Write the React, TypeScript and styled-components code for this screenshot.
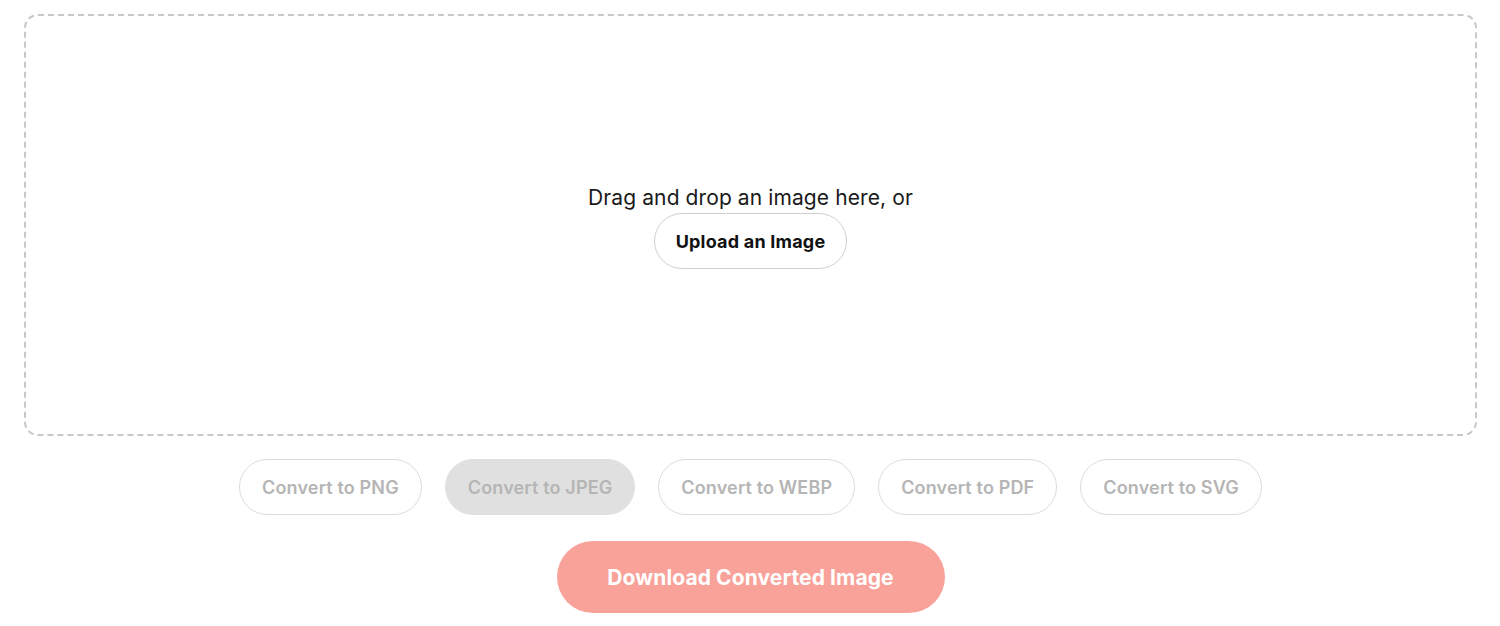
import React from "react";
import styled, { createGlobalStyle } from "styled-components";

const Global = createGlobalStyle`
  html, body { margin: 0; padding: 0; background: #ffffff; }
  body { font-family: Inter, "Noto Sans", Arial, sans-serif; }
  * { box-sizing: border-box; }
`;

const Page = styled.div`
  padding: 14px 23px 0 24px;
  display: flex;
  flex-direction: column;
  align-items: center;
`;

const DropZone = styled.div`
  width: 100%;
  height: 422px;
  border: 2px dashed #c8c8c8;
  border-radius: 14px;
  display: flex;
  flex-direction: column;
  align-items: center;
  justify-content: center;
  gap: 3px;
  padding-top: 4px;
`;

const Hint = styled.div`
  font-size: 21px;
  color: #1a1a1a;
  letter-spacing: 0.1px;
`;

const PillButton = styled.button<{ $active?: boolean }>`
  height: 56px;
  padding: 0 22px;
  border-radius: 28px;
  border: 1px solid ${(p) => (p.$active ? "#e0e0e0" : "#dcdcdc")};
  background: ${(p) => (p.$active ? "#e0e0e0" : "#ffffff")};
  font-family: Inter, "Noto Sans", Arial, sans-serif;
  font-size: 18px;
  font-weight: 600;
  letter-spacing: 0.15px;
  color: #b5b5b5;
  cursor: pointer;
`;

const UploadButton = styled(PillButton)`
  border-color: #cfcfcf;
  color: #111111;
  font-weight: 700;
  font-size: 18px;
  letter-spacing: 0.2px;
  padding: 0 21px;
`;

const ConvertRow = styled.div`
  display: flex;
  gap: 23px;
  margin-top: 23px;
`;

const DownloadButton = styled.button`
  margin-top: 26px;
  height: 72px;
  width: 388px;
  border: none;
  border-radius: 36px;
  background: #f9a29a;
  color: #ffffff;
  font-family: Inter, "Noto Sans", Arial, sans-serif;
  font-size: 21px;
  font-weight: 700;
  letter-spacing: 0.1px;
  cursor: pointer;
`;

const formats = ["PNG", "JPEG", "WEBP", "PDF", "SVG"];

export default function App() {
  return (
    <>
      <Global />
      <Page>
        <DropZone>
          <Hint>Drag and drop an image here, or</Hint>
          <UploadButton>Upload an Image</UploadButton>
        </DropZone>
        <ConvertRow>
          {formats.map((f) => (
            <PillButton key={f} $active={f === "JPEG"}>
              Convert to {f}
            </PillButton>
          ))}
        </ConvertRow>
        <DownloadButton>Download Converted Image</DownloadButton>
      </Page>
    </>
  );
}
